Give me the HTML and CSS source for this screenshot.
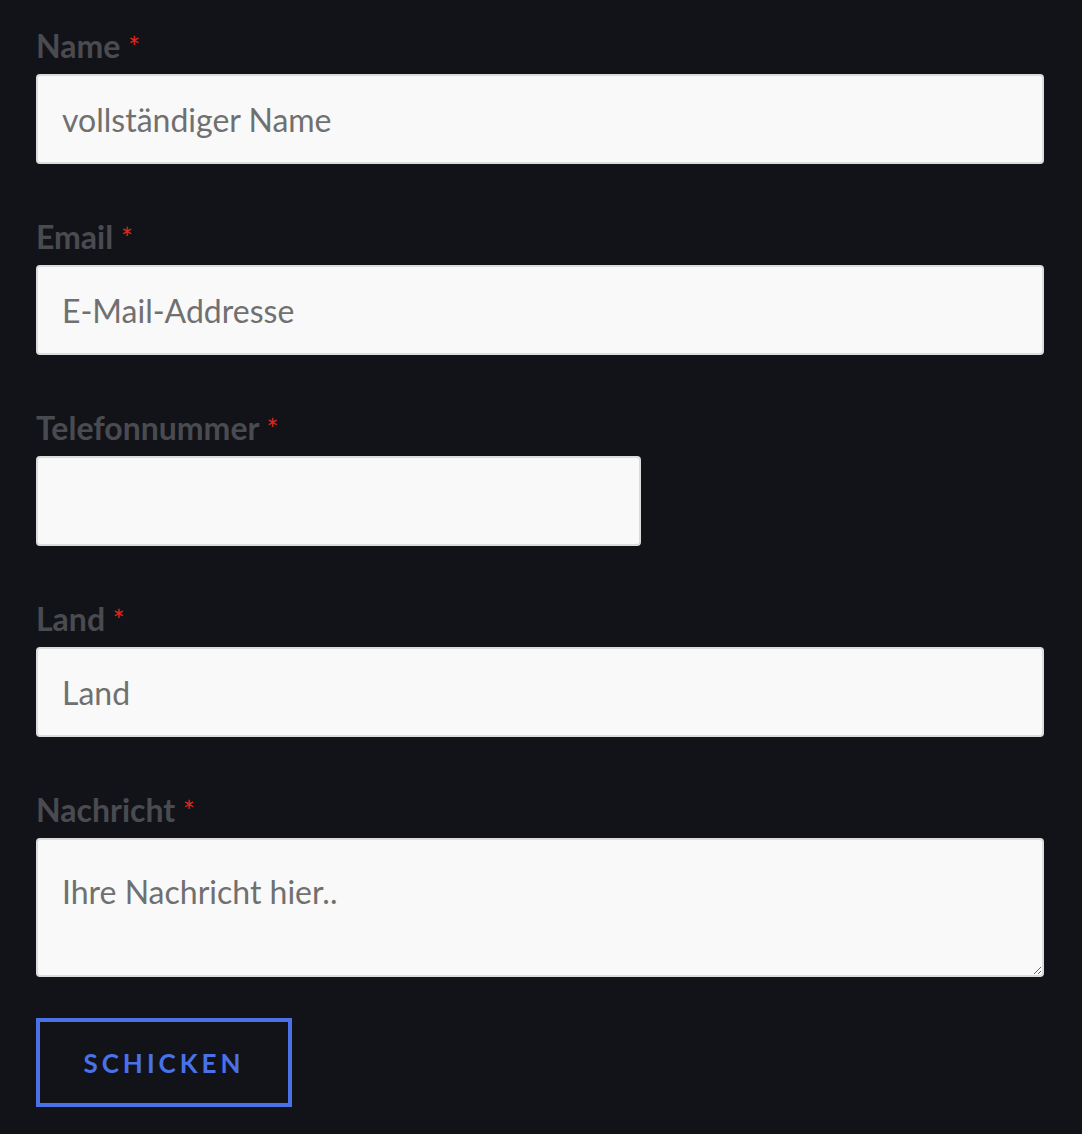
FILE: index.html
```html
<!DOCTYPE html>
<html lang="de">
<head>
    <meta charset="UTF-8">
    <meta name="viewport" content="width=device-width, initial-scale=1.0">
    <title>Kontakt</title>
    <link rel="stylesheet" href="styles.css">
</head>
<body>
    <form class="contact-form">
        <div class="field">
            <label for="name">Name <span class="req">*</span></label>
            <input type="text" id="name" placeholder="vollständiger Name">
        </div>
        <div class="field">
            <label for="email">Email <span class="req">*</span></label>
            <input type="email" id="email" placeholder="E-Mail-Addresse">
        </div>
        <div class="field">
            <label for="phone">Telefonnummer <span class="req">*</span></label>
            <input type="tel" id="phone" class="short">
        </div>
        <div class="field">
            <label for="country">Land <span class="req">*</span></label>
            <input type="text" id="country" placeholder="Land">
        </div>
        <div class="field">
            <label for="message">Nachricht <span class="req">*</span></label>
            <textarea id="message" placeholder="Ihre Nachricht hier.."></textarea>
        </div>
        <button type="button" class="submit">Schicken</button>
    </form>
</body>
</html>
```

FILE: styles.css
```css
html, body {
    background-color: #121318;
}

body {
    margin: 0;
    font-family: 'Lato', 'Open Sans', sans-serif;
}

.contact-form {
    width: 1008px;
    padding: 26px 36px;
}

.field {
    margin-bottom: 53px;
}

label {
    display: block;
    font-size: 32px;
    font-weight: bold;
    line-height: 40px;
    color: #4a4b50;
    margin-bottom: 8px;
}

.req {
    color: #e0281e;
    font-weight: normal;
    font-size: 28px;
    line-height: 0;
}

input,
textarea {
    display: block;
    width: 100%;
    height: 90px;
    padding: 0 24px;
    border: 2px solid #dcdcdc;
    border-radius: 4px;
    background-color: #f9f9f9;
    font-family: 'Lato', sans-serif;
    font-size: 32px;
    color: #333;
    box-sizing: border-box;
}

input.short {
    width: 605px;
}

textarea {
    height: 139px;
    padding: 33px 24px;
    line-height: 1.2;
    resize: vertical;
}

.field:last-of-type {
    margin-bottom: 41px;
}

::placeholder {
    color: #707070;
    opacity: 1;
}

.submit {
    display: block;
    width: 256px;
    height: 89px;
    background: transparent;
    border: 4px solid #4a72e8;
    color: #4a72e8;
    font-family: 'Lato', sans-serif;
    font-size: 26px;
    font-weight: bold;
    letter-spacing: 4px;
    text-transform: uppercase;
    cursor: pointer;
}
```
